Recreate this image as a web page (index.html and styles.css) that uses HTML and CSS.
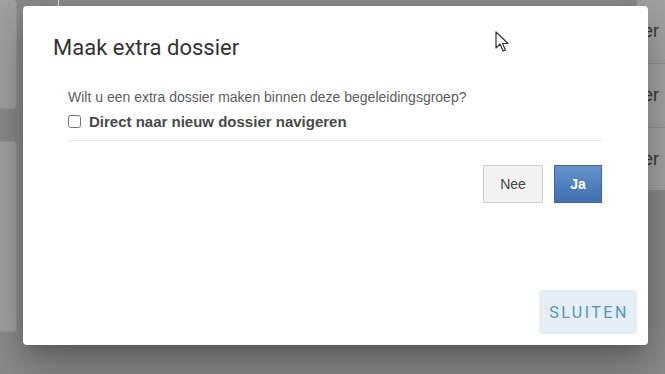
FILE: index.html
```html
<!DOCTYPE html>
<html lang="nl">
<head>
    <meta charset="UTF-8">
    <title>Maak extra dossier</title>
    <link rel="stylesheet" href="styles.css">
</head>
<body>
    <div class="page">
        <div class="left-col">
            <div class="side-card top"></div>
            <div class="side-card bottom"></div>
        </div>
        <div class="divider"></div>
        <div class="spacer"></div>
        <div class="right-col">
            <div class="row">der</div>
            <div class="row">der</div>
            <div class="row">der</div>
        </div>
    </div>

    <div class="overlay">
        <div class="dialog">
            <h2 class="dialog-title">Maak extra dossier</h2>
            <div class="dialog-body">
                <p class="question">Wilt u een extra dossier maken binnen deze begeleidingsgroep?</p>
                <label class="check-row">
                    <input type="checkbox">
                    <span>Direct naar nieuw dossier navigeren</span>
                </label>
                <div class="buttons">
                    <button class="btn btn-nee">Nee</button>
                    <button class="btn btn-ja">Ja</button>
                </div>
            </div>
            <div class="dialog-actions">
                <button class="btn-sluiten">SLUITEN</button>
            </div>
        </div>

        <!-- muiscursor -->
        <svg class="cursor" width="14" height="22" viewBox="0 0 14 22">
            <path d="M1 1 L1 17 L5 13 L8 20 L10.5 19 L7.5 12.5 L13 12.5 Z" fill="#fff" stroke="#333" stroke-width="1.2" stroke-linejoin="round"/>
        </svg>
    </div>
</body>
</html>
```

FILE: styles.css
```css
html, body {
    margin: 0;
    padding: 0;
}

body {
    width: 665px;
    height: 374px;
    overflow: hidden;
    background-color: #8b8b8b;
    font-family: 'Liberation Sans', Arial, sans-serif;
    position: relative;
}

/* achtergrondpagina (gedimd) */
.page {
    display: flex;
    height: 100%;
}

.left-col {
    width: 17px;
    display: flex;
    flex-direction: column;
}

.side-card {
    background-color: #a2a2a2;
    border-radius: 0 4px 4px 0;
    border: 1px solid #969696;
    border-left: none;
}

.side-card.top {
    height: 108px;
    border-top: none;
}

.side-card.bottom {
    height: 189px;
    margin-top: 32px;
}

.divider {
    width: 1px;
    height: 10px;
    background-color: #e0e0e0;
    margin-left: 41px;
}

.spacer {
    flex: 1;
}

.right-col {
    width: 28px;
    height: 190px;
    background-color: #a3a3a3;
    font-size: 18px;
    color: #3a3a3a;
}

.row {
    height: 63px;
    line-height: 63px;
    border-bottom: 1px solid #8f8f8f;
    margin-left: -4px;
    overflow: hidden;
    white-space: nowrap;
}

/* dialoog */
.overlay {
    position: absolute;
    top: 0;
    left: 0;
    right: 0;
    bottom: 0;
    padding: 6px 0 0 23px;
}

.dialog {
    width: 625px;
    height: 339px;
    background-color: #fff;
    border-radius: 4px;
    box-shadow: 0 11px 15px -7px rgba(0,0,0,0.2), 0 24px 38px 3px rgba(0,0,0,0.14), 0 9px 46px 8px rgba(0,0,0,0.12);
    display: flex;
    flex-direction: column;
    box-sizing: border-box;
}

.dialog-title {
    font-family: Roboto, 'Liberation Sans', sans-serif;
    font-weight: 400;
    font-size: 22px;
    color: #333;
    margin: 0;
    padding: 29px 30px 0;
    line-height: 26px;
}

.dialog-body {
    flex: 1;
    margin: 28px 46px 0 45px;
}

.question {
    margin: 0;
    font-size: 14px;
    color: #5e5e5e;
    line-height: 17px;
}

.check-row {
    display: flex;
    align-items: center;
    gap: 8px;
    margin-top: 7px;
    padding-bottom: 10px;
    border-bottom: 1px solid #e8e8e8;
    font-size: 15px;
    font-weight: bold;
    color: #4a4a4a;
}

.check-row input {
    width: 13px;
    height: 13px;
    margin: 0;
}

.buttons {
    display: flex;
    justify-content: flex-end;
    gap: 11px;
    margin-top: 24px;
}

.btn {
    height: 38px;
    font-family: 'Liberation Sans', Arial, sans-serif;
    font-size: 14px;
    border-radius: 0;
    padding: 0;
}

.btn-nee {
    width: 60px;
    background-color: #f2f2f2;
    border: 1px solid #d0d0d0;
    color: #444;
}

.btn-ja {
    width: 48px;
    background: linear-gradient(#6593cb, #3f6fb0);
    border: 1px solid #3c68a6;
    color: #fff;
    font-weight: bold;
}

.dialog-actions {
    display: flex;
    justify-content: flex-end;
    padding: 0 11px 11px 0;
}

.btn-sluiten {
    width: 98px;
    height: 44px;
    background-color: #e4eef4;
    border: none;
    border-radius: 4px;
    font-family: Roboto, 'Liberation Sans', sans-serif;
    font-weight: 400;
    font-size: 16px;
    letter-spacing: 2.5px;
    color: #5496c0;
    padding: 0 0 0 2px;
}

.cursor {
    position: absolute;
    left: 495px;
    top: 31px;
}
```
